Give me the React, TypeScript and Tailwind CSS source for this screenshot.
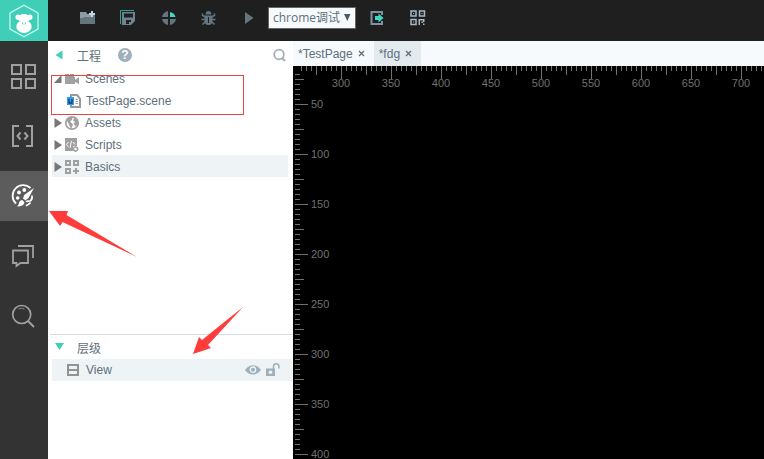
import { useEffect, useRef, useState } from "react";
import type { ReactNode } from "react";

type IconProps = { children: ReactNode; w?: number; h?: number };

function Icon({ children, w = 16, h = 16 }: IconProps) {
  return (
    <svg width={w} height={h} viewBox={`0 0 ${w} ${h}`} fill="none" aria-hidden="true" className="block shrink-0">
      {children}
    </svg>
  );
}

function Logo() {
  return (
    <Icon w={32} h={34}>
      <path d="M16 1.200 30 9v16L16 32.800 2 25V9z" stroke="#c9f5ee" strokeWidth="1.300" />
      <circle cx="10.200" cy="13.300" r="2.700" fill="#fff" />
      <circle cx="21.800" cy="13.300" r="2.700" fill="#fff" />
      <ellipse cx="16" cy="14.500" rx="5.500" ry="4.500" fill="#fff" />
      <ellipse cx="16" cy="22.500" rx="7.700" ry="6.500" fill="#fff" />
      <path d="M14.700 18.500v2M17.300 18.500v2" stroke="#3fcfb9" />
    </Icon>
  );
}

const FolderAdd = (
  <Icon>
    <path d="M0 2h6l1 2h8v10H0z" fill="#63757f" />
    <path d="M0 2h6l1 2h5v3H4l-1 1H0z" fill="#8b9ca6" />
    <path d="M12 1v6M9 4h6" stroke="#c5d8e2" strokeWidth="2" />
  </Icon>
);
const SaveAll = (
  <Icon>
    <path d="M.5 14V.500H14" stroke="#2fa796" />
    <path d="M2 2h13v9l-4 4H2z" fill="#71838e" />
    <path d="M4 3.500h9v4H4zM6 10h5v2H9v2H6z" fill="#1f1f1f" />
  </Icon>
);
const Target = (
  <Icon>
    <path d="M7 1v6H1c.5-3 3-5.500 6-6zM1 9h6v6c-3-.5-5.500-3-6-6zM9 9h6c-.5 3-3 5.500-6 6z" fill="#63757f" />
    <path d="M9 2c3 .5 5 2.500 5.500 5H9z" fill="#3fd8c0" />
  </Icon>
);
const Bug = (
  <Icon>
    <path d="M4.500 4.500C4.700 2 6 1 7.500 1s2.800 1 3 3.500zM3.500 5.500h8V11c0 2.500-1.500 4-4 4s-4-1.500-4-4z" fill="#63757f" />
    <path d="M1.500 3.500v2l3 1.500M13.500 3.500v2l-3 1.500M.5 9.500H4M14.500 9.500H11M1.500 14.500l3-3M13.500 14.500l-3-3" stroke="#63757f" strokeWidth="1.500" />
    <path d="M7.500 7v6" stroke="#1f1f1f" />
  </Icon>
);
const Play = (
  <Icon>
    <path d="M4 2l8.500 6L4 14z" fill="#63757f" />
  </Icon>
);
const Export = (
  <Icon>
    <path d="M12 5V2H1.500v12H12v-3" stroke="#7f929d" strokeWidth="2" />
    <path d="M5 6h3.500V3.500L13.500 8l-5 4.500V10H5z" fill="#3fd8c0" />
  </Icon>
);
const QrCode = (
  <Icon>
    <path d="M1 1h5v5H1zM9.500 1h5v5h-5zM1 9.500h5v5H1z" stroke="#a9b8c1" strokeWidth="1.500" />
    <path d="M3 3h1v1H3zM11.500 3h1v1h-1zM3 11.500h1v1H3zM8.500 9h6v1.500H10V15H8.500zM11.500 11.500H13V13h-1.500zM13 10.500h1.500V12H13zM13 13.500h1.500V15H13z" fill="#a9b8c1" />
  </Icon>
);

const railItems: { name: string; active?: boolean; icon: ReactNode }[] = [
  {
    name: "Modules",
    icon: (
      <Icon w={26} h={26}>
        <path d="M1 2h9v9H1zM15 2h9v9h-9zM1 16h9v9H1zM15 16h9v9h-9z" stroke="#a0a0a0" strokeWidth="2" />
      </Icon>
    ),
  },
  {
    name: "Code",
    icon: (
      <Icon w={26} h={26}>
        <path d="M8 3H2v20h6M15 3h6v20h-6" stroke="#a0a0a0" strokeWidth="2" />
        <path d="M9.500 9.500 6.500 13l3 3.500M13.500 9.500l3 3.500-3 3.500" stroke="#a0a0a0" strokeWidth="2" />
      </Icon>
    ),
  },
  {
    name: "Design",
    active: true,
    icon: (
      <Icon w={26} h={26}>
        <path d="M19.500 5A10 10 0 1 0 5 20.500" stroke="#fff" strokeWidth="1.800" />
        <path d="M21 12.500c.3 2.500-.3 4.500-1.500 5.300-1.500.6-3.500-.3-4.300.9M19.500 19.500c-1.200 1.600-2.700 2.700-4.700 3.200" stroke="#fff" strokeWidth="1.700" />
        <circle cx="8" cy="9.500" r="1.900" fill="#fff" />
        <circle cx="13.300" cy="7" r="1.900" fill="#fff" />
        <circle cx="6.700" cy="15" r="1.800" fill="#fff" />
        <path d="M23 5 17.500 15l-3 2.500L12 15.500l1.200-3.500zM11.200 17l2.300 2.300c-.5 3-3 4.500-7.500 4 2-1 1.500-3 2.500-4.500.6-1 1.500-1.600 2.700-1.800z" fill="#fff" />
      </Icon>
    ),
  },
  {
    name: "Messages",
    icon: (
      <Icon w={26} h={26}>
        <path d="M7 3h15v12M2 7.500h15V20H9.500L5.500 23v-3H2z" stroke="#a0a0a0" strokeWidth="1.800" />
      </Icon>
    ),
  },
  {
    name: "Search",
    icon: (
      <Icon w={26} h={26}>
        <circle cx="10.700" cy="11.500" r="9" stroke="#a0a0a0" strokeWidth="1.700" />
        <path d="M17 18l6 6" stroke="#a0a0a0" strokeWidth="2" />
        <path d="M7.500 6q3-1.500 6 0" stroke="#858585" />
      </Icon>
    ),
  },
];

const Camera = (
  <Icon>
    <path d="M1 3h4v2h1V3h4v3h1v7H1zM11 9l4-3v7l-4-2z" fill="#a0a0a0" />
  </Icon>
);
const SceneFile = (
  <Icon>
    <path d="M5 2h6l3 3.500V14H5z" fill="#fff" stroke="#929ba0" strokeWidth="2" />
    <path d="M9.500 6.500H12M9.500 8.500H12M9.500 10.500H12" stroke="#929ba0" />
    <path d="M1 4h7v8H1z" fill="#2f9bf5" />
    <path d="M3 6v4h3V6" stroke="#17415f" strokeWidth="1.300" />
  </Icon>
);
const Globe = (
  <Icon>
    <circle cx="8" cy="8" r="6.200" fill="#fff" stroke="#a0a0a0" strokeWidth="1.700" />
    <path d="M2.500 5c1-2 3.500-3.500 6-2.500L8 5 6 6.500 7.500 8 9 9.500 7.500 13.500 6 12 5 9.500zM10 3l3 2 1 4-2.500 2.500-2-3L11 7 9 5.500z" fill="#a0a0a0" />
  </Icon>
);
const ScriptFile = (
  <Icon>
    <path d="M1 1h12v8H9v5H1z" fill="#a0a0a0" />
    <path d="M4.500 5 2.500 7.500l2 2.500M7.500 4l-1.500 7M9 5l2 2.500" stroke="#fff" />
    <circle cx="11.500" cy="12" r="2" stroke="#a0a0a0" strokeWidth="1.500" />
    <path d="M11.500 9v1M11.500 14v1M8.500 12h1M13.500 12h1" stroke="#a0a0a0" />
  </Icon>
);
const Widgets = (
  <Icon>
    <path d="M2 2h4v4H2zM10 2h4v4h-4zM2 10h4v4H2z" stroke="#a0a0a0" strokeWidth="2" />
    <path d="M12 9v6M9 12h6" stroke="#a0a0a0" strokeWidth="2" />
  </Icon>
);

function Caret({ open }: { open?: boolean }) {
  return (
    <Icon w={8} h={10}>
      <path d={open ? "M7.500 1v8H0z" : "M.5 0 8 5 .5 10z"} fill="#777" />
    </Icon>
  );
}

const folders = [
  { name: "Assets", icon: Globe, selected: false },
  { name: "Scripts", icon: ScriptFile, selected: false },
  { name: "Basics", icon: Widgets, selected: true },
];

const tools = [
  { name: "New folder", icon: FolderAdd },
  { name: "Save all", icon: SaveAll },
  { name: "Preview", icon: Target },
  { name: "Debug", icon: Bug },
  { name: "Run", icon: Play },
];

function Toolbar() {
  return (
    <header className="flex h-[41px] shrink-0 items-center bg-[#1f1f1f] pb-[5px]">
      <div className="flex w-[212px] justify-between pl-8 pr-[3px]">
        {tools.map((t) => (
          <button key={t.name} type="button" aria-label={t.name}>
            {t.icon}
          </button>
        ))}
      </div>
      <div className="relative ml-2 h-[22px] w-[88px]">
        <select
          aria-label="Debug mode"
          className="block h-full w-full appearance-none border border-[#666] bg-[#f6fafd] pl-1 font-['Open_Sans','Noto_Sans_CJK_SC',sans-serif] text-xs leading-5 text-[#5d707b] outline-none"
        >
          <option>chrome调试</option>
        </select>
        <span className="pointer-events-none absolute inset-y-0 right-[5px] flex items-center">
          <Icon w={8} h={8}>
            <path d="M1 0h6.500L4.300 7z" fill="#4c5a63" />
          </Icon>
        </span>
      </div>
      <button type="button" aria-label="Export" className="ml-[14px]">
        {Export}
      </button>
      <button type="button" aria-label="QR code" className="ml-6">
        {QrCode}
      </button>
    </header>
  );
}

function ProjectPanel() {
  return (
    <section className="flex h-[293px] shrink-0 flex-col">
      <div className="flex h-[33px] shrink-0 items-center pb-[5px] pl-[7px] pr-[7px]">
        <button type="button" aria-label="Collapse">
          <Icon w={8} h={10}>
            <path d="M7.500.500v9L.5 5z" fill="#3fcfb9" />
          </Icon>
        </button>
        <h2 className="ml-[14px] pt-px font-['Noto_Sans_CJK_SC',sans-serif] text-xs">工程</h2>
        <button
          type="button"
          className="ml-[17px] size-[14px] rounded-full bg-[#9fb0bb] text-xs leading-[14px] font-bold text-white"
        >
          ?
        </button>
        <button type="button" aria-label="Search project" className="ml-auto">
          <Icon w={13} h={14}>
            <circle cx="6" cy="6.500" r="4.800" stroke="#9fb0bb" strokeWidth="1.800" />
            <path d="M9 10l3 3" stroke="#9fb0bb" strokeWidth="2" />
          </Icon>
        </button>
      </div>
      <div className="overflow-hidden pl-1 pr-[5px]">
        <ul className="-mt-[7px]">
          <li className="flex h-[22px] items-center pt-px pl-[2px]">
            <Caret open />
            <span className="mr-[5px] ml-[2px]">{Camera}</span>
            <span>Scenes</span>
          </li>
          <li className="flex h-[22px] items-center gap-1 pt-px pl-[14px]">
            {SceneFile}
            <span>TestPage.scene</span>
          </li>
          {folders.map((f) => (
            <li
              key={f.name}
              className={`flex h-[22px] items-center pt-px pl-[2px] ${f.selected ? "bg-[#eef3f6]" : ""}`}
            >
              <Caret />
              <span className="mr-[5px] ml-[2px]">{f.icon}</span>
              <span>{f.name}</span>
            </li>
          ))}
        </ul>
      </div>
    </section>
  );
}

function HierarchyPanel() {
  return (
    <section className="ml-[2px] flex-1 border-t border-[#d5dee3]">
      <div className="flex h-6 items-center pl-[5px]">
        <button type="button" aria-label="Collapse hierarchy">
          <Icon w={10} h={10}>
            <path d="M0 1h9L4.500 8z" fill="#3fcfb9" />
          </Icon>
        </button>
        <h2 className="ml-3 pt-px font-['Noto_Sans_CJK_SC',sans-serif] text-xs">层级</h2>
      </div>
      <div className="mr-px ml-[2px] flex h-[22px] items-center bg-[#eef3f6] pl-[14px] pr-3">
        <Icon w={14} h={14}>
          <path d="M2 2h10v10H2zM2 7h10" stroke="#929292" strokeWidth="2" />
        </Icon>
        <span className="ml-[6px]">View</span>
        <button type="button" aria-label="Toggle visibility" className="ml-auto">
          <Icon w={16} h={12}>
            <path d="M0 6c4-6.500 12-6.500 16 0-4 6-12 6-16 0z" fill="#9fb0bb" />
            <circle cx="8" cy="5.700" r="2.700" fill="#9fb0bb" stroke="#eef3f6" strokeWidth="1.400" />
          </Icon>
        </button>
        <button type="button" aria-label="Toggle lock" className="ml-1">
          <Icon w={15} h={14}>
            <path d="M1 5.500h9V13H1z" fill="#9fb0bb" />
            <path d="M8.500 6V3.500a2.700 2.700 0 0 1 5.400 0v2" stroke="#9fb0bb" strokeWidth="1.500" />
            <circle cx="5.500" cy="9.300" r="1.800" fill="#eef3f6" />
          </Icon>
        </button>
      </div>
    </section>
  );
}

const minor = [5, 10, 15, 20, 30, 35, 40, 45];

function Canvas() {
  const box = useRef<HTMLDivElement>(null);
  const [size, setSize] = useState({ w: 0, h: 0 });

  useEffect(() => {
    const el = box.current;
    if (!el) return;
    const measure = () => setSize({ w: el.clientWidth, h: el.clientHeight });
    measure();
    const observer = new ResizeObserver(measure);
    observer.observe(el);
    return () => observer.disconnect();
  }, []);

  // Only the labels that fit inside the visible rulers are drawn.
  const columns = Math.max(0, Math.floor((size.w - 58) / 50) + 1);
  const rows = Math.max(0, Math.floor((size.h - 38) / 50) + 1);

  return (
    <div ref={box} className="relative min-h-0 flex-1 bg-black">
      <svg
        className="absolute inset-0 size-full font-['Liberation_Sans',Arial,sans-serif] text-[11px]"
        fill="#707070"
        shapeRendering="crispEdges"
      >
        <defs>
          <pattern id="hTicks" x="48" y="0" width="50" height="13" patternUnits="userSpaceOnUse">
            {minor.map((m) => (
              <rect key={m} x={m} width="1" height="5" />
            ))}
            <rect x="0" width="1" height="13" />
            <rect x="25" width="1" height="9" />
          </pattern>
          <pattern id="vTicks" x="2" y="38" width="13" height="50" patternUnits="userSpaceOnUse">
            {minor.map((m) => (
              <rect key={m} y={m} width="5" height="1" />
            ))}
            <rect y="0" width="13" height="1" />
            <rect y="25" width="9" height="1" />
          </pattern>
        </defs>
        <rect x="8" y="0" width="100%" height="13" fill="url(#hTicks)" />
        <rect x="2" y="8" width="13" height="100%" fill="url(#vTicks)" />
        {Array.from({ length: columns }, (_, i) => (
          <text key={i} x={48 + i * 50} y="21" textAnchor="middle">
            {300 + i * 50}
          </text>
        ))}
        {Array.from({ length: rows }, (_, i) => (
          <text key={i} x="18" y={42 + i * 50}>
            {50 + i * 50}
          </text>
        ))}
      </svg>
    </div>
  );
}

function Tab({ title, shaded }: { title: string; shaded?: boolean }) {
  return (
    <div className={`flex items-center gap-[5px] pl-[5px] pr-[9px] ${shaded ? "bg-[#e4ebef]" : ""}`}>
      <button type="button">{title}</button>
      <button type="button" aria-label={`Close ${title}`}>
        <Icon w={7} h={7}>
          <path d="M1 1l5 5M6 1 1 6" stroke="#5d707b" strokeWidth="1.300" />
        </Icon>
      </button>
    </div>
  );
}

export default function App() {
  return (
    <div className="relative flex h-screen overflow-hidden bg-white font-['Liberation_Sans',Arial,'Noto_Sans_CJK_SC',sans-serif] text-xs text-[#5d707b]">
      <aside className="flex w-12 shrink-0 flex-col bg-[#333]">
        <div className="flex h-[41px] shrink-0 items-center justify-center bg-[#3fcfb9]">
          <Logo />
        </div>
        <nav className="flex flex-col gap-[10px] pt-[10px]">
          {railItems.map((r) => (
            <button
              key={r.name}
              type="button"
              aria-label={r.name}
              className={`flex h-[50px] items-center justify-center ${r.active ? "bg-[#5c5c5c]" : ""}`}
            >
              {r.icon}
            </button>
          ))}
        </nav>
      </aside>
      <div className="flex min-w-0 flex-1 flex-col">
        <Toolbar />
        <div className="flex min-h-0 flex-1">
          <div className="flex w-[245px] shrink-0 flex-col">
            <ProjectPanel />
            <HierarchyPanel />
          </div>
          <main className="flex min-w-0 flex-1 flex-col">
            <div className="flex h-[25px] shrink-0 bg-[#f6fafd]">
              <Tab title="*TestPage" />
              <Tab title="*fdg" shaded />
            </div>
            <Canvas />
          </main>
        </div>
      </div>
      <svg className="pointer-events-none absolute top-0 left-0" width="300" height="400" aria-hidden="true">
        <rect x="51.500" y="75.500" width="192" height="39" fill="none" stroke="#f0403f" />
        <path d="M49 211h19l-1.500 4L137 257l-74.500-35-2.500 4zM193 354l6-17 3 3 41-33-35 38 3 3z" fill="#ff3b3b" />
      </svg>
    </div>
  );
}
